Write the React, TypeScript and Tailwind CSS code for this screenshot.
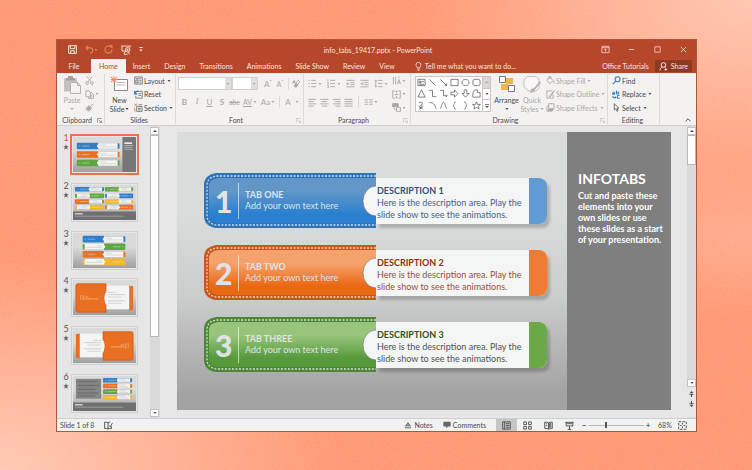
import { useState } from 'react';
import type { ReactNode } from 'react';
import clsx from 'clsx';

/**
 * Presentation editor window: title bar, ribbon, slide list, canvas, status bar.
 */

type Tone = 'blue' | 'orange' | 'green';

interface InfoTab {
  tone: Tone;
  name: string;
  title: string;
}

const INFO_TABS: InfoTab[] = [
  { tone: 'blue', name: 'TAB ONE', title: 'DESCRIPTION 1' },
  { tone: 'orange', name: 'TAB TWO', title: 'DESCRIPTION 2' },
  { tone: 'green', name: 'TAB THREE', title: 'DESCRIPTION 3' },
];

const TONES = {
  blue: {
    frame: '#2f74b6',
    top: '#6296c8',
    bottom: '#2a80d0',
    cap: 'bg-[#629bd3]',
    title: 'text-[#2f5578]',
    body: 'text-[#48637f]',
  },
  orange: {
    frame: '#c8571a',
    top: '#f6a26c',
    bottom: '#ea6812',
    cap: 'bg-[#ed7d35]',
    title: 'text-[#8f3010]',
    body: 'text-[#965039]',
  },
  green: {
    frame: '#4c8638',
    top: '#98c57b',
    bottom: '#579a3c',
    cap: 'bg-[#6ba946]',
    title: 'text-[#2c5226]',
    body: 'text-[#4c544c]',
  },
};

const MENU = ['Home', 'Insert', 'Design', 'Transitions', 'Animations', 'Slide Show', 'Review', 'View'];

export default function App() {
  const [activeMenu, setActiveMenu] = useState('Home');
  const [selected, setSelected] = useState(1);

  return (
    <div className="relative flex min-h-screen bg-[#ff9873] bg-[radial-gradient(ellipse_at_bottom_left,#ffc9b4_0%,transparent_32%),radial-gradient(ellipse_at_top_right,#ffc6b0_0%,transparent_32%),radial-gradient(ellipse_at_right,#ffac8e_0%,transparent_24%)] pt-[39px] pr-[55px] pb-[38px] pl-14 font-['Lato',sans-serif] text-[7px] leading-[8px] text-[#4a4a4a]">
      <Grain />
      <div className="relative flex min-w-0 flex-1 flex-col border border-[#a9563c] bg-[#e6e6e6]">
        <TitleBar />
        <MenuBar active={activeMenu} onSelect={setActiveMenu} />
        <Ribbon />
        <div className="flex min-h-0 flex-1">
          <SlideList selected={selected} onSelect={setSelected} />
          <Scrollbar thumb="h-[202px]" />
          <main className="flex min-w-0 flex-1 border-l border-[#dadada] pt-[6px] pr-4 pb-2 pl-[17px]">
            <Slide />
          </main>
          <Scrollbar thumb="h-[30px]" paging />
        </div>
        <StatusBar />
      </div>
    </div>
  );
}

function Grain() {
  return (
    <svg className="absolute inset-0 h-full w-full opacity-10" aria-hidden>
      <filter id="grain">
        <feTurbulence type="fractalNoise" baseFrequency="0.55" numOctaves="2" />
        <feColorMatrix values="0 0 0 0 1  0 0 0 0 0.9  0 0 0 0 0.85  2 0 0 0 -0.7" />
      </filter>
      <rect width="100%" height="100%" filter="url(#grain)" />
    </svg>
  );
}

/* ---------- title bar and menu ---------- */

function TitleBar() {
  return (
    <header className="flex h-[19px] items-center bg-[#b7472a] pr-2 pl-[11px] text-[#fbe6df]">
      <div className="flex flex-1 items-center">
        <IconButton label="Save" className="mr-2">
          <Icon size={9} w={1.1}>
            <path d="M.7.7h8.6v8.6H.7zM2.5.7v3.4h5V.7M3 9.3V6.4h4v2.9" />
          </Icon>
        </IconButton>
        <IconButton label="Undo" className="text-[#e0884f]">
          <Icon size={9} w={1.2}>
            <path d="M3.6.8 1 3.2l2.6 2.4M1.2 3.2h4.6C9.600 3.200 9.600 8.800 5.600 9" />
          </Icon>
        </IconButton>
        <Caret className="mr-[6px] text-[#e0884f]" />
        <IconButton label="Redo" className="mr-2 text-[#e0884f]">
          <Icon size={9} w={1.2}>
            <path d="M6 1.400A3.900 3.900 0 1 0 8.800 4.800M5.800.4h3v3M8.600.6 6.400 2.800" />
          </Icon>
        </IconButton>
        <IconButton label="Start from beginning" className="mr-2">
          <Icon size={10} w={0.9}>
            <path d="M.3 1h9.400M1 1v5h3M9 1v1.500M4.500 6 3 9M3 9.300h3.500" />
            <circle cx="6.600" cy="4.800" r="2.300" />
            <path d="M6 3.900v1.800l1.500-.9zM7.500 7l.8 2.300" />
          </Icon>
        </IconButton>
        <IconButton label="Customize toolbar">
          <svg width="4" height="5" viewBox="0 0 5 6" fill="currentColor" aria-hidden>
            <path d="M.5 0h4v1h-4zM.5 3h4L2.500 5.500z" />
          </svg>
        </IconButton>
      </div>
      <h1>info_tabs_19417.pptx - PowerPoint</h1>
      <div className="flex flex-1 items-center justify-end gap-[17px]">
        <IconButton label="Ribbon options">
          <Icon size={9} w={0.8}>
            <path d="M1 1.500h8v7H1zM1 3h8M5 7.500v-3M3.700 5.600 5 4.300l1.300 1.300" />
          </Icon>
        </IconButton>
        <IconButton label="Minimize">
          <Icon size={9} w={0.8}>
            <path d="M2 5h6" />
          </Icon>
        </IconButton>
        <IconButton label="Maximize">
          <Icon size={9} w={0.8}>
            <path d="M2 2h6v6H2z" />
          </Icon>
        </IconButton>
        <IconButton label="Close">
          <Icon size={9} w={0.8}>
            <path d="m2 2 6 6M8 2 2 8" />
          </Icon>
        </IconButton>
      </div>
    </header>
  );
}

function MenuBar({ active, onSelect }: { active: string; onSelect(name: string): void }) {
  return (
    <nav className="flex h-[14px] items-stretch bg-[#b7472a] pr-1 text-[#fbe6df]">
      <button type="button" className="w-[34px]">
        File
      </button>
      {MENU.map((name) => (
        <button
          key={name}
          type="button"
          onClick={() => onSelect(name)}
          className={clsx(
            name === active ? 'bg-[#f3f2f1] px-2 text-[#b7472a]' : 'px-[7px]',
          )}
        >
          {name}
        </button>
      ))}
      <label className="ml-3 flex min-w-0 items-center gap-[2px]">
        <Icon size={9} w={0.9}>
          <path d="M3.500 6.500C3.500 5.400 2.200 4.900 2.200 3.200a2.800 2.800 0 0 1 5.600 0c0 1.700-1.300 2.200-1.300 3.300zM3.700 8h2.600M4.200 9.400h1.600" />
        </Icon>
        <input
          aria-label="Tell me what you want to do"
          placeholder="Tell me what you want to do..."
          className="w-24 bg-transparent outline-none placeholder:text-[#fbe6df]"
        />
      </label>
      <button type="button" className="ml-auto px-[6px]">
        Office Tutorials
      </button>
      <button type="button" className="my-px flex items-center gap-[3px] bg-[#8c3a24] px-1">
        <Icon size={9} w={1.1}>
          <circle cx="5" cy="3.300" r="2.600" />
          <path d="M1 9.500c.2-2 1.200-3.400 2.600-3.900M6.400 5.600l1 .9M7.500 6.800v3M6 8.300h3" />
        </Icon>
        Share
      </button>
    </nav>
  );
}

/* ---------- ribbon ---------- */

function Ribbon() {
  return (
    <section className="flex h-[53px] shrink-0 items-stretch border-b border-[#d2d0ce] bg-[#f3f2f1] py-px">
      <Group label="Clipboard" width="w-[48px]" launcher="text-[#777]">
        <BigButton label="Paste" muted className="w-[26px]">
          <svg width="18" height="18" viewBox="0 0 18 18" aria-hidden>
            <path d="M1 2.500h13v13H1z" fill="#c4c2c0" />
            <path d="M5 0h5v2h2v2.500H3V2h2z" fill="#a3a2a0" />
            <path d="M7.500 6.500h7l3 3v8h-10z" fill="#f3f2f1" stroke="#b5b3b1" />
            <path d="M14.500 6.500v3h3" fill="none" stroke="#b5b3b1" />
          </svg>
        </BigButton>
        <div className="flex flex-col items-start justify-between pt-px pb-1 text-[#a9a8a6]">
          <IconButton label="Cut">
            <Icon size={9}>
              <path d="M2 .5 6.800 6.500M8 .5 3.200 6.500" />
              <circle cx="2.400" cy="7.900" r="1.500" />
              <circle cx="7.600" cy="7.900" r="1.500" />
            </Icon>
          </IconButton>
          <div className="flex items-center gap-px">
            <IconButton label="Copy">
              <Icon size={9}>
                <path d="M1 1h3.500L6 2.500v5H1zM6 3h1.500L9.300 4.800v4.700H4V7.500M5.500 6h2.300M5.500 7.700h2.300" />
              </Icon>
            </IconButton>
            <Caret />
          </div>
          <IconButton label="Format painter">
            <Icon size={9} w={1.1}>
              <path d="m9.300.8-3 3M4.500 2.600 7.600 5.700M3.900 3.400 1 6.500l2.500 2.700 3.400-3z" />
              <path d="m2 6 3 2.500L6.500 6 4 3.800z" fill="currentColor" />
            </Icon>
          </IconButton>
        </div>
      </Group>

      <Group label="Slides" width="w-[71px]">
        <BigButton label="New Slide" lines={['New', 'Slide']} className="w-[25px]">
          <svg width="18" height="16" viewBox="0 0 18 16" fill="none" aria-hidden>
            <path d="M3.500 3.500h13v11h-13z" fill="#fff" stroke="#8a8886" />
            <path d="M5.500 6.500h9M5.500 9h9" stroke="#b8b6b4" />
            <path d="M0 1l6 5M6 1 0 6M3 0v7M0 3.500h7" stroke="#ee8355" />
          </svg>
        </BigButton>
        <SmallStack>
          <SmallButton label="Layout" caret>
            <Icon size={9} className="text-[#777]">
              <path d="M.8 1h8.400v8H.8zM2 3h6M2 4.500h2.500v3H2zM6 5h2M6 7h2" />
            </Icon>
          </SmallButton>
          <SmallButton label="Reset">
            <Icon size={9} className="text-[#777]">
              <path d="M4 1.500h5.200V9H2V6.500M5 4h3M5 6h3" />
              <path d="M.8 1.200v3h3M.9 4C1.500 2.200 3 1 4.800 1.300" stroke="#2f77bd" strokeWidth="1.400" />
            </Icon>
          </SmallButton>
          <SmallButton label="Section" caret>
            <Icon size={9} className="text-[#777]">
              <path d="M3 4h6v5.300H3zM4.500 6h3M4.500 7.600h3M5 2h4" />
              <path d="M.5 1 3.500 3M3.500.5.500 3.500M.8 5v4h1" stroke="#ee8355" />
            </Icon>
          </SmallButton>
        </SmallStack>
      </Group>

      <Group label="Font" width="w-[128px]" launcher="text-[#c2c0be]">
        <div className="flex flex-1 flex-col gap-[6px] pt-[2px] text-[#a9a8a6]">
          <div className="flex h-[13px] items-center">
            <ComboBox label="Font name" width="w-[54px]" />
            <ComboBox label="Font size" width="w-[26px]" />
            <button type="button" aria-label="Increase font size" className="ml-1 w-3 text-[8px]">
              A<sup className="text-[6px]">ˆ</sup>
            </button>
            <button type="button" aria-label="Decrease font size" className="w-3">
              A<sup className="text-[6px]">ˇ</sup>
            </button>
            <Rule />
            <IconButton label="Clear formatting">
              <Icon size={9}>
                <path d="M1.500 5 3.500 1.500 5 5M2.200 4h2M4 7l4-5.500L9.500 3 6 8.800H4.500z" />
                <path d="m4 7 1.500-2 2 1.500L6 8.800H4.500z" fill="currentColor" />
              </Icon>
            </IconButton>
          </div>
          <div className="flex h-3 items-center text-[8px]">
            <button type="button" className="w-[13px] font-bold">B</button>
            <button type="button" className="w-3 font-['Liberation_Serif',serif] italic">I</button>
            <button type="button" className="w-[13px] underline">U</button>
            <button type="button" className="w-3 font-bold">S</button>
            <button type="button" className="w-[13px] text-[7px] line-through">abc</button>
            <button type="button" className="flex w-[18px] items-center justify-center text-[7px]">
              <span className="underline">AV</span>
              <Caret className="ml-px" />
            </button>
            <button type="button" className="flex w-[18px] items-center justify-center">
              Aa
              <Caret className="ml-px" />
            </button>
            <Rule />
            <button type="button" className="flex w-5 items-center justify-center gap-1">
              A
              <Caret />
            </button>
          </div>
        </div>
      </Group>

      <Group label="Paragraph" width="w-[107px]" launcher="text-[#c2c0be]">
        <div className="flex flex-1 gap-1 pl-[2px] text-[#a9a8a6]">
          <div className="flex flex-1 flex-col gap-[6px] pt-[2px]">
            <div className="flex h-[13px] items-center justify-between">
              <IconButton label="Bullets" caret>
                <Icon size={9}>
                  <path d="M3.500 1.500H9M3.500 5H9M3.500 8.500H9M.5 1.500h1.300M.5 5h1.300M.5 8.500h1.300" />
                </Icon>
              </IconButton>
              <IconButton label="Numbering" caret>
                <Icon size={9}>
                  <path d="M3.500 1.500H9M3.500 5H9M3.500 8.500H9M1 .3v2.400M.5 4h1v1.800h-1M.5 7.400h1v2.300h-1" />
                </Icon>
              </IconButton>
              <IconButton label="Decrease indent">
                <Icon size={9}>
                  <path d="M.5 1.500h9M5 4h4.500M5 6.300h4.500M.5 8.700h9M4 5.200H.7M2.200 3.800.7 5.200l1.500 1.400" />
                </Icon>
              </IconButton>
              <IconButton label="Increase indent">
                <Icon size={9}>
                  <path d="M.5 1.500h9M5 4h4.500M5 6.300h4.500M.5 8.700h9M.5 5.200h3.300M2.400 3.800l1.500 1.400-1.500 1.400" />
                </Icon>
              </IconButton>
              <IconButton label="Line spacing" caret>
                <Icon size={9}>
                  <path d="M4.500 1.500h5M4.500 5h5M4.500 8.500h5M2 1v8M.6 2.500 2 1l1.400 1.500M.6 7.500 2 9l1.400-1.500" />
                </Icon>
              </IconButton>
            </div>
            <div className="flex h-3 items-center justify-between pr-[10px]">
              <IconButton label="Align left">
                <Icon size={9}>
                  <path d="M.5 1.500h8.500M.5 4h6M.5 6.500h8.500M.5 9h6" />
                </Icon>
              </IconButton>
              <IconButton label="Align center">
                <Icon size={9}>
                  <path d="M.5 1.500h9M2 4h6M.5 6.500h9M2 9h6" />
                </Icon>
              </IconButton>
              <IconButton label="Align right">
                <Icon size={9}>
                  <path d="M1 1.500h8.500M3.500 4h6M1 6.500h8.500M3.500 9h6" />
                </Icon>
              </IconButton>
              <IconButton label="Justify">
                <Icon size={9}>
                  <path d="M.5 1.500h9M.5 4h9M.5 6.500h9M.5 9h9" />
                </Icon>
              </IconButton>
              <Rule />
              <IconButton label="Columns" caret>
                <Icon size={9}>
                  <path d="M.5 2h4M5.700 2h4M.5 4.500h4M5.700 4.500h4M.5 7h4M5.700 7h4" />
                </Icon>
              </IconButton>
            </div>
          </div>
          <div className="flex flex-col justify-between pt-px pr-1 pb-1">
            <IconButton label="Text direction" caret>
              <Icon size={9}>
                <path d="M1.500 1v8M4 1v8M6 9l1.700-5L9.400 9M6.500 7.500h2.300M7.700.5v2.200" />
              </Icon>
            </IconButton>
            <IconButton label="Align text" caret>
              <Icon size={9}>
                <path d="M3 1H.8v8H3M7 1h2.200v8H7M5 1v2.600M5 9V6.400M3 5h4M4 2l1-1 1 1M4 8l1 1 1-1" />
              </Icon>
            </IconButton>
            <IconButton label="Convert to diagram" caret>
              <Icon size={9}>
                <path d="M.8.8h6v3h-6zM5 5h4.500v4.300H5zM2.500 4v3H5" />
                <path d="M.8.8h6v3h-6z" fill="currentColor" />
              </Icon>
            </IconButton>
          </div>
        </div>
      </Group>

      <Group label="Drawing" width="w-[197px]" launcher="text-[#c2c0be]">
        <ShapeGallery />
        <BigButton label="Arrange" className="w-[27px]" lines={['Arrange']}>
          <svg width="18" height="16" viewBox="0 0 18 16" aria-hidden>
            <path d="M8 2h7v6H8zM3 8h7v6H3z" fill="#f0b450" />
            <path d="M1.500.500h6v6h-6zM10.500 9.500h6v6h-6z" fill="#fff" stroke="#777" />
          </svg>
        </BigButton>
        <BigButton label="Quick Styles" muted className="w-6" lines={['Quick', 'Styles']}>
          <svg width="18" height="18" viewBox="0 0 18 18" aria-hidden>
            <path d="M4 .5h9L16 3v9l-3 3H6l-5-4V4z" fill="#f8f8f8" stroke="#c2c0be" />
            <path d="M17 5 11 12l-3 1-1 4 4-1 1.500-3L18 7z" fill="#b5b3b1" />
          </svg>
        </BigButton>
        <SmallStack muted>
          <SmallButton label="Shape Fill" caret>
            <Icon size={9}>
              <path d="M4.500 1.500 1 5l3.500 3.500L8 5zM3 3.500V1.200a1.200 1.200 0 0 1 2.400 0v2M9 5.500v3" />
            </Icon>
          </SmallButton>
          <SmallButton label="Shape Outline" caret>
            <Icon size={9}>
              <path d="M7 1H1v8h7V5M9.300.8 4.500 6l-.8 1.500L5.200 7z" />
            </Icon>
          </SmallButton>
          <SmallButton label="Shape Effects" caret>
            <Icon size={9}>
              <path d="M3 .8h6v5.500H3zM3 2.500 1 4v5h5.500L8 7" />
              <path d="M2 8.500h5l1-1.500H3z" fill="currentColor" />
            </Icon>
          </SmallButton>
        </SmallStack>
      </Group>

      <Group label="Editing" width="w-[52px]">
        <SmallStack>
          <SmallButton label="Find">
            <Icon size={9} w={1.2} className="text-[#2f77bd]">
              <circle cx="6.200" cy="3.600" r="2.700" />
              <path d="M4.200 5.600.8 9" />
            </Icon>
          </SmallButton>
          <SmallButton label="Replace" caret>
            <Icon size={9} className="text-[#2f77bd]">
              <path d="M.5 2.500h2.500v2.300H.5V3.700H3M5 .5v4h2.500V2.400H5M8.500 6H6v3.200h2.800M1 6.500v1.800h3.500M3.300 7l1.200 1.300L3.300 9.600" />
            </Icon>
          </SmallButton>
          <SmallButton label="Select" caret>
            <Icon size={9} className="text-[#666]">
              <path d="M2.500.8v7l1.800-1.600 1.200 3 1.200-.5-1.200-2.900h2.300z" />
            </Icon>
          </SmallButton>
        </SmallStack>
      </Group>

      <IconButton label="Collapse ribbon" className="mt-auto mr-1 ml-auto">
        <Icon size={8} w={1.2}>
          <path d="m2 6.500 3-3 3 3" />
        </Icon>
      </IconButton>
    </section>
  );
}

function Group({
  label,
  width,
  launcher,
  children,
}: {
  label: string;
  width: string;
  launcher?: string;
  children: ReactNode;
}) {
  return (
    <div className={clsx('flex shrink-0 flex-col border-r border-[#dcdad8] pt-px', width)}>
      <div className="flex min-h-0 flex-1 items-stretch pl-[2px]">{children}</div>
      <div className="flex h-2 items-center pr-[2px]">
        <span className="flex-1 text-center">{label}</span>
        {launcher && (
          <IconButton label={`${label} settings`} className={launcher}>
            <Icon size={5} w={1.4}>
              <path d="M1 9V1h8M4 4l5 5M9 5v4H5" />
            </Icon>
          </IconButton>
        )}
      </div>
    </div>
  );
}

function BigButton({
  label,
  lines = [label],
  muted,
  className,
  children,
}: {
  label: string;
  lines?: string[];
  muted?: boolean;
  className: string;
  children: ReactNode;
}) {
  return (
    <button
      type="button"
      className={clsx('flex shrink-0 flex-col items-center pt-px', className, muted && 'text-[#a9a8a6]')}
    >
      <span className="flex h-[20px] items-start">{children}</span>
      <span className="h-2">{lines[0]}</span>
      <span className="flex h-[9px] items-center gap-px">
        {lines[1]}
        <Caret />
      </span>
    </button>
  );
}

function SmallStack({ muted, children }: { muted?: boolean; children: ReactNode }) {
  return (
    <div className={clsx('flex flex-col items-start justify-between px-[2px] pt-px pb-1', muted && 'text-[#a9a8a6]')}>
      {children}
    </div>
  );
}

function SmallButton({ label, caret, children }: { label: string; caret?: boolean; children: ReactNode }) {
  return (
    <button type="button" className="flex items-center gap-px whitespace-nowrap">
      {children}
      {label}
      {caret && <Caret className="ml-px" />}
    </button>
  );
}

function ComboBox({ label, width }: { label: string; width: string }) {
  return (
    <span className={clsx('flex h-[13px] items-stretch border border-[#d2d0ce] bg-white', width)}>
      <select aria-label={label} className="min-w-0 flex-1 appearance-none outline-none">
        <option />
      </select>
      <span className="flex w-[6px] items-center justify-center bg-[#e1dfdd]">
        <Caret />
      </span>
    </span>
  );
}

const SHAPES = [
  'M1 1.500h8v7H1zM2.500 3.500h2v2h-2zM5.500 4H8M2.500 7H8',
  'M1.500 1.500 8.500 8.500',
  'M1.500 1.500 8.500 8.500M8.500 6v2.500H6',
  'M1 1.500h8v7H1z',
  'M5 1.500a4 3.500 0 1 0 .01 0z',
  'M3 1.500h4a2 2 0 0 1 2 2v3a2 2 0 0 1-2 2H3a2 2 0 0 1-2-2v-3a2 2 0 0 1 2-2z',
  'M5 1 9 9H1z',
  'M1 1.500h4v7h4',
  'M1 1.500h4v6h4M7.500 6 9 7.500 7.500 9',
  'M1 3.500h4V1l4 4-4 4V6.500H1z',
  'M3.500 1h3v4H9L5 9 1 5h2.500z',
  'M3 1h3v3h3v5H1V4z',
  'M2 2c3-2 5 0 3 2S1 6 3 7s3 1 3 2M6 4 3 9l4-3',
  'M1 1.500c5 0 7 3 8 7.500',
  'M1 8.500c2 0 2-7 4-7s2 7 4 7',
  'M6.500.8C4 .8 5.500 4.500 3.500 5 5.500 5.500 4 9.200 6.500 9.200',
  'M3.500.8C6 .8 4.500 4.500 6.500 5 4.500 5.500 6 9.200 3.500 9.200',
  'm5 .8 1.200 3h3.200L6.900 5.700l1 3.300L5 7.100 2.100 9l1-3.300L.6 3.800h3.200z',
];

function ShapeGallery() {
  return (
    <div className="mx-[2px] mt-px flex h-[36px] shrink-0 border border-[#c8c6c4] bg-white text-[#555]">
      <div className="grid grid-cols-6 place-items-center gap-x-[2px] px-px">
        {SHAPES.map((d, i) => (
          <IconButton key={i} label={`Shape ${i + 1}`}>
            <Icon size={9} w={0.8}>
              <path d={d} />
            </Icon>
          </IconButton>
        ))}
      </div>
      <div className="flex w-2 flex-col border-l border-[#c8c6c4]">
        <span className="flex flex-1 items-center justify-center bg-[#dad8d6] text-[#aaa]">
          <Caret up />
        </span>
        <span className="flex flex-1 items-center justify-center border-y border-[#c8c6c4]">
          <Caret />
        </span>
        <span className="flex flex-1 items-center justify-center">
          <Caret bar />
        </span>
      </div>
    </div>
  );
}

/* ---------- slide list ---------- */

function SlideList({ selected, onSelect }: { selected: number; onSelect(n: number): void }) {
  return (
    <aside className="flex w-[93px] shrink-0 flex-col justify-between pt-2 pb-1 pl-[5px]">
      {[1, 2, 3, 4, 5, 6].map((n) => (
        <button
          key={n}
          type="button"
          aria-label={`Slide ${n}`}
          aria-pressed={n === selected}
          onClick={() => onSelect(n)}
          className="flex items-start"
        >
          <span
            className={clsx(
              'flex w-2 flex-col items-center gap-[2px] text-[9px]',
              n === selected ? 'text-[#d9572f]' : 'text-[#555]',
            )}
          >
            {n}
            <svg width="6" height="6" viewBox="0 0 10 10" fill="#666" aria-hidden>
              <path d="m5 .5 1.300 3.200 3.400.1L7 6l1 3.500-3-2-3 2L3 6 .3 3.800l3.400-.1z" />
            </svg>
          </span>
          <span
            className={clsx(
              'flex p-px',
              n === selected ? 'border-2 border-[#e8734a]' : 'm-px border border-[#d0d0d0]',
            )}
          >
            <Thumbnail n={n} />
          </span>
        </button>
      ))}
    </aside>
  );
}

const BLUE = '#2f7fca';
const ORANGE = '#ea6f20';
const GREEN = '#5fa544';
const YELLOW = '#f4b72c';

function Thumbnail({ n }: { n: number }) {
  return (
    <svg width="63" height="35" viewBox="0 0 65 37" preserveAspectRatio="none" aria-hidden>
      <defs>
        <linearGradient id={`thumb${n}`} x1="0" y1="0" x2="0" y2="1">
          <stop offset="0.4" stopColor="#dadada" />
          <stop offset="1" stopColor="#a0a0a0" />
        </linearGradient>
      </defs>
      <rect width="65" height="37" fill={`url(#thumb${n})`} />
      {n === 1 && (
        <>
          <rect x="51" width="14" height="37" fill="#777" />
          <path d="M53 6.500h8" stroke="#fff" strokeWidth="1.500" />
          <path d="M53 9h9M53 11h8M53 13h9" stroke="#ccc" strokeWidth="0.700" />
          <MiniTab x={4} y={6} w={44} h={7} fill={BLUE} />
          <MiniTab x={4} y={15} w={44} h={7} fill={ORANGE} />
          <MiniTab x={4} y={24} w={44} h={7} fill={GREEN} />
        </>
      )}
      {n === 2 && (
        <>
          <MiniTab x={2} y={2} w={30} h={5} fill={BLUE} />
          <MiniTab x={33} y={2} w={29} h={5} fill={GREEN} />
          <MiniTab x={2} y={9} w={30} h={5} fill={GREEN} flip />
          <MiniTab x={33} y={9} w={29} h={5} fill={BLUE} flip />
          <MiniTab x={2} y={15} w={30} h={5} fill={ORANGE} />
          <MiniTab x={33} y={15} w={29} h={5} fill={YELLOW} />
          <MiniTab x={2} y={21} w={30} h={5} fill={YELLOW} flip />
          <MiniTab x={33} y={21} w={29} h={5} fill={ORANGE} flip />
          <Footer />
        </>
      )}
      {n === 3 && (
        <>
          <MiniTab x={10} y={3} w={44} h={7} fill={BLUE} />
          <MiniTab x={10} y={11} w={44} h={7} fill={GREEN} flip />
          <MiniTab x={10} y={19} w={44} h={7} fill={ORANGE} />
          <MiniTab x={10} y={27} w={44} h={7} fill={YELLOW} flip />
        </>
      )}
      {n === 4 && <BigTab />}
      {n === 5 && (
        <g transform="translate(65) scale(-1 1)">
          <BigTab />
        </g>
      )}
      {n === 6 && (
        <>
          <rect x="3" y="3" width="26" height="21" fill="#858585" />
          <path d="M5 6h20M5 10h22M5 14h18M5 18h21M5 21h18" stroke="#696969" />
          <MiniTab x={31} y={2} w={30} h={5} fill={BLUE} />
          <MiniTab x={31} y={8} w={30} h={5} fill={ORANGE} />
          <MiniTab x={31} y={14} w={30} h={5} fill={GREEN} />
          <MiniTab x={31} y={20} w={30} h={5} fill={YELLOW} />
          <Footer />
        </>
      )}
    </svg>
  );
}

function MiniTab({
  x,
  y,
  w,
  h,
  fill,
  flip,
}: {
  x: number;
  y: number;
  w: number;
  h: number;
  fill: string;
  flip?: boolean;
}) {
  const half = w / 2;
  return (
    <g transform={flip ? `translate(${x + w} ${y}) scale(-1 1)` : `translate(${x} ${y})`}>
      <rect x={half} y={0.5} width={half} height={h - 1} rx="1" fill={fill} />
      <rect x={half} y={0.5} width={half - 2} height={h - 1} fill="#f4f4f4" />
      <rect width={half} height={h} rx="1" fill={fill} />
      <circle cx={half + 0.5} cy={h / 2} r={h / 4} fill="#f4f4f4" />
      <path d={`M${half + 2} ${h / 2 - 1}h6M${half + 2} ${h / 2 + 0.8}h${half - 6}`} stroke="#bbb" strokeWidth="0.500" />
      <path d={`M2 ${h / 2}h1.500M5 ${h / 2}h8`} stroke="#fff" strokeOpacity="0.500" strokeWidth="0.800" />
    </g>
  );
}

function BigTab() {
  return (
    <>
      <rect x="57" y="6" width="5" height="26" rx="1.500" fill={ORANGE} />
      <rect x="32" y="6" width="26" height="25" fill="#f4f4f4" />
      <path d="M5 4h29v8q-4 7 0 15v7H5q-2 0-2-2V6q0-2 2-2z" fill={ORANGE} stroke="#c8571a" strokeWidth="0.800" />
      <path d="M34.500 12q-4 7 0 15z" fill="#f4f4f4" />
      <path d="M8 16v5M10.500 16v6M12 18h4M12 20h14" stroke="#f7b78f" strokeWidth="0.800" />
      <path d="M36 13h8M36 15.500h18M36 18h14M36 22h18M36 24.500h14" stroke="#c2c2c2" strokeWidth="0.700" />
    </>
  );
}

function Footer() {
  return (
    <>
      <rect y="28" width="65" height="9" fill="#707070" />
      <path d="M2 30.500h8" stroke="#fff" />
      <path d="M2 33h50" stroke="#a8a8a8" strokeWidth="0.800" />
    </>
  );
}

/* ---------- canvas ---------- */

function Slide() {
  return (
    <article className="flex min-w-0 flex-1 bg-linear-to-b from-[#dadcdb] from-30% via-[#cbcccc] via-60% to-[#a2a2a2] to-95% text-[9px] leading-[11px]">
      <div className="flex min-w-0 flex-1 flex-col gap-[17px] pt-[41px] pr-[20px] pl-[27px]">
        {INFO_TABS.map((tab, i) => (
          <InfoTabRow key={tab.title} tab={tab} index={i + 1} />
        ))}
      </div>
      <aside className="w-[104px] shrink-0 bg-[#7f7f7f] pt-[38px] pl-[11px] font-bold text-white">
        <h2 className="mb-[2px] text-[14px] leading-[18px]">INFOTABS</h2>
        <p>
          Cut and paste these
          <br />
          elements into your
          <br />
          own slides or use
          <br />
          these slides as a start
          <br />
          of your presentation.
        </p>
      </aside>
    </article>
  );
}

function InfoTabRow({ tab, index }: { tab: InfoTab; index: number }) {
  const tone = TONES[tab.tone];
  return (
    <section className="flex h-[55px] items-center">
      <div className="relative h-[55px] w-[172px] shrink-0">
        <TabShape tone={tab.tone} />
        <div className="relative flex h-full items-center text-[#dfe3e8]">
          <span className="w-[34px] pl-[11px] text-[30px] leading-[32px] font-black">{index}</span>
          <span className="h-9 w-px bg-white/60" />
          <div className="pb-[2px] pl-[6px]">
            <h3 className="font-bold">{tab.name}</h3>
            <p>Add your own text here</p>
          </div>
        </div>
      </div>
      <div className="flex h-[46px] min-w-0 flex-1 rounded-r-lg bg-[#f4f5f5] shadow-[3px_4px_3px_rgba(0,0,0,0.2)]">
        <div className="min-w-0 flex-1 pt-[7px] pl-px leading-[12px] whitespace-nowrap">
          <h3 className={clsx('font-bold', tone.title)}>{tab.title}</h3>
          <p className={tone.body}>
            Here is the description area. Play the
            <br />
            slide show to see the animations.
          </p>
        </div>
        <div className={clsx('w-[18px] shrink-0 rounded-r-lg', tone.cap)} />
      </div>
    </section>
  );
}

// Stitched label with a round bite taken out of its right edge.
function TabShape({ tone }: { tone: Tone }) {
  const { frame, top, bottom } = TONES[tone];
  return (
    <svg className="absolute inset-0" width="172" height="55" viewBox="0 0 172 55" aria-hidden>
      <defs>
        <linearGradient id={`tab-${tone}`} x1="0" y1="0" x2="0" y2="1">
          <stop offset="0.100" stopColor={top} />
          <stop offset="0.300" stopColor={top} />
          <stop offset="0.800" stopColor={bottom} />
        </linearGradient>
      </defs>
      <path d="M12 0h160v55H12Q0 53 0 43V12Q0 2 12 0z" fill={frame} />
      <path d="M14 5h158v45H14q-9-1-9-8V13q0-7 9-8z" fill={`url(#tab-${tone})`} />
      <path
        d="M172 3H13Q3 4 3 13v29q0 9 10 10h159"
        fill="none"
        stroke="#fff"
        strokeOpacity="0.750"
        strokeWidth="1.300"
        strokeDasharray="2 1.500"
      />
      <path d="M172 13a13 15 0 0 0 0 30z" fill="#f4f5f5" />
      <path d="M172 13a13 15 0 0 0 0 30" fill="none" stroke="#6b6b6b" strokeOpacity="0.600" />
    </svg>
  );
}

function Scrollbar({ thumb, paging }: { thumb: string; paging?: boolean }) {
  return (
    <div className="flex w-[9px] shrink-0 flex-col items-stretch bg-[#dadada] py-px">
      <button type="button" aria-label="Scroll up" className="flex h-2 items-center justify-center border border-[#c4c4c4] bg-white">
        <Caret up />
      </button>
      <div className={clsx('border border-[#b8b8b8] bg-white', thumb)} />
      <button
        type="button"
        aria-label="Scroll down"
        className="mt-auto flex h-2 items-center justify-center border border-[#c4c4c4] bg-white"
      >
        <Caret />
      </button>
      {paging && (
        <div className="flex h-[30px] flex-col items-center justify-start gap-1 bg-[#e6e6e6] pt-1">
          <IconButton label="Previous slide">
            <svg width="5" height="6" viewBox="0 0 5 6" fill="currentColor" aria-hidden>
              <path d="M2.500 0 4.500 2.200h-4zM.5 3h4v.7h-4zM2 3.500h1V6H2z" />
            </svg>
          </IconButton>
          <IconButton label="Next slide">
            <svg width="5" height="6" viewBox="0 0 5 6" fill="currentColor" aria-hidden>
              <path d="M2 0h1v2.500H2zM.5 2.300h4V3h-4zM.5 3.800h4L2.500 6z" />
            </svg>
          </IconButton>
        </div>
      )}
    </div>
  );
}

/* ---------- status bar ---------- */

function StatusBar() {
  const [zoom, setZoom] = useState(68);
  return (
    <footer className="flex h-[13px] shrink-0 items-center border-t border-[#cfcfcf] bg-[#f3f2f1] pr-[9px] pl-[3px]">
      <span>Slide 1 of 8</span>
      <IconButton label="Spelling" className="ml-[10px]">
        <Icon size={9}>
          <path d="M4.500 2Q3 1 .7 1.300v7Q3 8 4.500 9V2Q6 1 7 1.200M4.500 9Q6 8 8.300 8.300V6M5.700 5l1.300 1.500L9.500 2" />
        </Icon>
      </IconButton>
      <button type="button" className="ml-auto flex items-center gap-[2px]">
        <Icon size={8}>
          <path d="M1 6h8M1 8.500h8M3 5l2-3 2 3z" />
        </Icon>
        Notes
      </button>
      <button type="button" className="mr-[10px] ml-[10px] flex items-center gap-[2px]">
        <svg width="8" height="8" viewBox="0 0 10 10" fill="#666" aria-hidden>
          <path d="M.5 1h9v6H6L4 9.500V7H.5z" />
        </svg>
        Comments
      </button>
      <ViewButton label="Normal view" active>
        <path d="M.8 1h8.400v8H.8zM3 1v8M4.500 3h3.500M4.500 5h3.500M4.500 7h3.500" />
      </ViewButton>
      <ViewButton label="Slide sorter">
        <path d="M.8 1h3v3h-3zM6.200 1h3v3h-3zM.8 6h3v3h-3zM6.200 6h3v3h-3z" />
      </ViewButton>
      <ViewButton label="Reading view">
        <path d="M5 2Q3 1 .8 1.300v7Q3 8 5 9q2-1 4.200-.7v-7Q7 1 5 2v7M2 3l1.500.3M2 5l1.500.3M6 2.500v5M7.500 2v5.500" />
      </ViewButton>
      <ViewButton label="Slide show">
        <path d="M.3 1.500h9.400M1.300 1.500v4h7.400v-4M5 5.500V9M3 9.300h4M2 3h6" />
      </ViewButton>
      <button type="button" aria-label="Zoom out" className="w-2 text-[8px] font-bold">
        −
      </button>
      <input
        type="range"
        aria-label="Zoom"
        min={10}
        max={190}
        value={zoom}
        onChange={(e) => setZoom(Number(e.target.value))}
        className="h-[6px] w-[56px] appearance-none bg-[linear-gradient(#b8b8b8,#b8b8b8)] bg-[length:100%_1px] bg-center bg-no-repeat [&::-webkit-slider-thumb]:h-[6px] [&::-webkit-slider-thumb]:w-[2px] [&::-webkit-slider-thumb]:appearance-none [&::-webkit-slider-thumb]:bg-[#555]"
      />
      <button type="button" aria-label="Zoom in" className="w-2 text-[8px] font-bold">
        +
      </button>
      <output className="ml-[6px] w-5">{zoom}%</output>
      <IconButton label="Fit to window">
        <Icon size={9}>
          <path d="M.8.8h8.400v8.400H.8z" strokeDasharray="2.800 1.400" />
          <path d="M5 2v2M5 6v2M2 5h2M6 5h2" />
        </Icon>
      </IconButton>
    </footer>
  );
}

function ViewButton({ label, active, children }: { label: string; active?: boolean; children: ReactNode }) {
  return (
    <button
      type="button"
      aria-label={label}
      aria-pressed={!!active}
      className={clsx('flex h-full w-[21px] shrink-0 items-center justify-center', active && 'bg-[#c6c6c6]')}
    >
      <Icon size={9}>{children}</Icon>
    </button>
  );
}

/* ---------- small pieces ---------- */

function IconButton({
  label,
  caret,
  className,
  children,
}: {
  label: string;
  caret?: boolean;
  className?: string;
  children: ReactNode;
}) {
  return (
    <button type="button" aria-label={label} className={clsx('flex items-center gap-px', className)}>
      {children}
      {caret && <Caret />}
    </button>
  );
}

function Icon({
  size,
  w = 1,
  className,
  children,
}: {
  size: number;
  w?: number;
  className?: string;
  children: ReactNode;
}) {
  return (
    <svg
      width={size}
      height={size}
      viewBox="0 0 10 10"
      fill="none"
      stroke="currentColor"
      strokeWidth={w}
      className={clsx('shrink-0', className)}
      aria-hidden
    >
      {children}
    </svg>
  );
}

function Caret({ up, bar, className }: { up?: boolean; bar?: boolean; className?: string }) {
  return (
    <svg width="4" height="4" viewBox="0 0 4 4" fill="currentColor" className={clsx('shrink-0', className)} aria-hidden>
      <path d={up ? 'M2 1 4 3H0z' : bar ? 'M0 0h4v.7H0zM0 2h4L2 4z' : 'M.5 1h3L2 3z'} />
    </svg>
  );
}

function Rule() {
  return <span className="mx-[2px] h-3 w-px bg-[#dcdad8]" />;
}
